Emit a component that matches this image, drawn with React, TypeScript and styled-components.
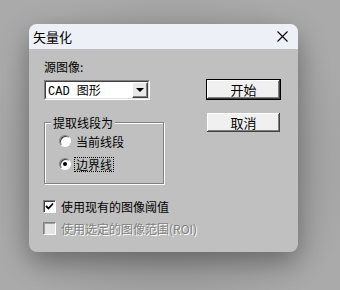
import React from "react"
import styled, { createGlobalStyle } from "styled-components"

const GlobalStyle = createGlobalStyle`
  html, body {
    margin: 0;
    padding: 0;
    background: #a6a6a6;
  }
  body {
    font-family: "Noto Sans CJK SC", "Liberation Sans", sans-serif;
    font-size: 12px;
    color: #000;
  }
`

const Page = styled.div`
  width: 340px;
  height: 290px;
  padding: 24px 0 0 29px;
  box-sizing: border-box;
  background: radial-gradient(ellipse at 50% 55%, #8c8c8c 0%, #9c9c9c 45%, #aaaaaa 80%);
  overflow: hidden;
`

const Dialog = styled.div`
  width: 269px;
  height: 228px;
  border-radius: 8px;
  overflow: hidden;
  background: #c0c0c0;
  box-shadow: 0 10px 28px rgba(0, 0, 0, 0.35);
  display: flex;
  flex-direction: column;
`

const TitleBar = styled.div`
  height: 25px;
  flex: none;
  background: #eef0f8;
  display: flex;
  align-items: center;
  padding: 0 10px 0 4px;
  font-size: 13px;
`

const TitleText = styled.span`
  flex: 1;
`

const Body = styled.div`
  flex: 1;
  padding: 10px 17px 0 15px;
  display: flex;
  flex-direction: column;
`

const TopRow = styled.div`
  display: flex;
  justify-content: space-between;
`

const LeftCol = styled.div`
  width: 120px;
  display: flex;
  flex-direction: column;
`

const Label = styled.div`
  height: 16px;
  line-height: 16px;
`

const Combo = styled.div`
  margin-top: 5px;
  width: 106px;
  height: 20px;
  box-sizing: border-box;
  border-top: 1px solid #808080;
  border-left: 1px solid #808080;
  border-right: 1px solid #ffffff;
  border-bottom: 1px solid #ffffff;
  display: flex;
`

const ComboInner = styled.div`
  flex: 1;
  display: flex;
  background: #fff;
  border-top: 1px solid #404040;
  border-left: 1px solid #404040;
  border-right: 1px solid #dfdfdf;
  border-bottom: 1px solid #dfdfdf;
`

const ComboText = styled.span`
  flex: 1;
  padding-left: 2px;
  line-height: 16px;
  font-family: "Liberation Mono", "Noto Sans CJK SC", monospace;
  font-size: 12px;
  white-space: nowrap;
`

const ComboTextCjk = styled.span`
  font-family: "Noto Sans CJK SC", sans-serif;
`

const DropButton = styled.div`
  width: 16px;
  box-sizing: border-box;
  background: #e8e8e8;
  border-top: 1px solid #ffffff;
  border-left: 1px solid #ffffff;
  border-right: 1px solid #404040;
  border-bottom: 1px solid #404040;
  box-shadow: inset -1px -1px 0 #808080;
  display: flex;
  align-items: center;
  justify-content: center;
`

const Arrow = styled.div`
  width: 0;
  height: 0;
  border-left: 4px solid transparent;
  border-right: 4px solid transparent;
  border-top: 4px solid #000;
`

const Group = styled.div`
  position: relative;
  margin-top: 22px;
  height: 62px;
  box-sizing: border-box;
  border: 1px solid #808080;
  box-shadow: inset 1px 1px 0 #fff, 1px 1px 0 #fff;
  padding: 11px 0 0 14px;
  display: flex;
  flex-direction: column;
  gap: 9px;
`

const GroupLabel = styled.span`
  position: absolute;
  top: -8px;
  left: 6px;
  padding: 0 2px;
  background: #c0c0c0;
  line-height: 15px;
`

const OptionRow = styled.div`
  display: flex;
  align-items: center;
  height: 14px;
  gap: 4px;
`

const Radio = styled.span<{ $checked?: boolean }>`
  width: 12px;
  height: 12px;
  box-sizing: border-box;
  border-radius: 50%;
  background: #fff;
  border: 1px solid;
  border-color: #808080 #fff #fff #808080;
  box-shadow: inset 1px 1px 0 #404040;
  display: flex;
  align-items: center;
  justify-content: center;
  &::after {
    content: "";
    width: 4px;
    height: 4px;
    border-radius: 50%;
    background: ${p => (p.$checked ? "#000" : "transparent")};
  }
`

const OptionText = styled.span<{ $focus?: boolean }>`
  line-height: 13px;
  padding: 0 1px;
  outline: ${p => (p.$focus ? "1px dotted #000" : "none")};
`

const ButtonCol = styled.div`
  margin-top: 20px;
  display: flex;
  flex-direction: column;
  gap: 12px;
`

const Button = styled.div<{ $default?: boolean }>`
  width: 75px;
  height: 21px;
  box-sizing: border-box;
  background: #f0f0f0;
  border: 1px solid ${p => (p.$default ? "#000" : "#c0c0c0")};
  box-shadow: inset -1px -1px 0 #404040, inset 1px 1px 0 #fff,
    inset -2px -2px 0 #808080;
  display: flex;
  align-items: center;
  justify-content: center;
  font-size: 13px;
`

const CheckRow = styled.div<{ $disabled?: boolean }>`
  display: flex;
  align-items: center;
  height: 14px;
  margin-left: -1px;
  margin-top: ${p => (p.$disabled ? "8px" : "15px")};
  gap: 5px;
  color: ${p => (p.$disabled ? "#808080" : "#000")};
  text-shadow: ${p => (p.$disabled ? "1px 1px 0 #fff" : "none")};
`

const CheckBox = styled.span<{ $disabled?: boolean }>`
  width: 13px;
  height: 13px;
  box-sizing: border-box;
  background: ${p => (p.$disabled ? "#e4e4e4" : "#fff")};
  border: 1px solid;
  border-color: #808080 #fff #fff #808080;
  box-shadow: inset 1px 1px 0 ${p => (p.$disabled ? "#a0a0a0" : "#404040")};
  display: flex;
  align-items: center;
  justify-content: center;
`

function CloseIcon() {
  return (
    <svg width="11" height="11" viewBox="0 0 11 11">
      <path d="M0.5 0.5 L10.5 10.5 M10.5 0.5 L0.5 10.5" stroke="#000" strokeWidth="1.1" />
    </svg>
  )
}

function CheckMark() {
  return (
    <svg width="9" height="9" viewBox="0 0 9 9">
      <path d="M1 4 L3.5 6.5 L8 1.5" stroke="#000" strokeWidth="1.8" fill="none" />
    </svg>
  )
}

export default function App() {
  return (
    <Page>
      <GlobalStyle />
      <Dialog>
        <TitleBar>
          <TitleText>矢量化</TitleText>
          <CloseIcon />
        </TitleBar>
        <Body>
          <TopRow>
            <LeftCol>
              <Label>源图像:</Label>
              <Combo>
                <ComboInner>
                  <ComboText>
                    CAD <ComboTextCjk>图形</ComboTextCjk>
                  </ComboText>
                  <DropButton>
                    <Arrow />
                  </DropButton>
                </ComboInner>
              </Combo>
              <Group>
                <GroupLabel>提取线段为</GroupLabel>
                <OptionRow>
                  <Radio />
                  <OptionText>当前线段</OptionText>
                </OptionRow>
                <OptionRow>
                  <Radio $checked />
                  <OptionText $focus>边界线</OptionText>
                </OptionRow>
              </Group>
            </LeftCol>
            <ButtonCol>
              <Button $default>开始</Button>
              <Button>取消</Button>
            </ButtonCol>
          </TopRow>
          <CheckRow>
            <CheckBox>
              <CheckMark />
            </CheckBox>
            <span>使用现有的图像阈值</span>
          </CheckRow>
          <CheckRow $disabled>
            <CheckBox $disabled />
            <span>使用选定的图像范围(ROI)</span>
          </CheckRow>
        </Body>
      </Dialog>
    </Page>
  )
}
